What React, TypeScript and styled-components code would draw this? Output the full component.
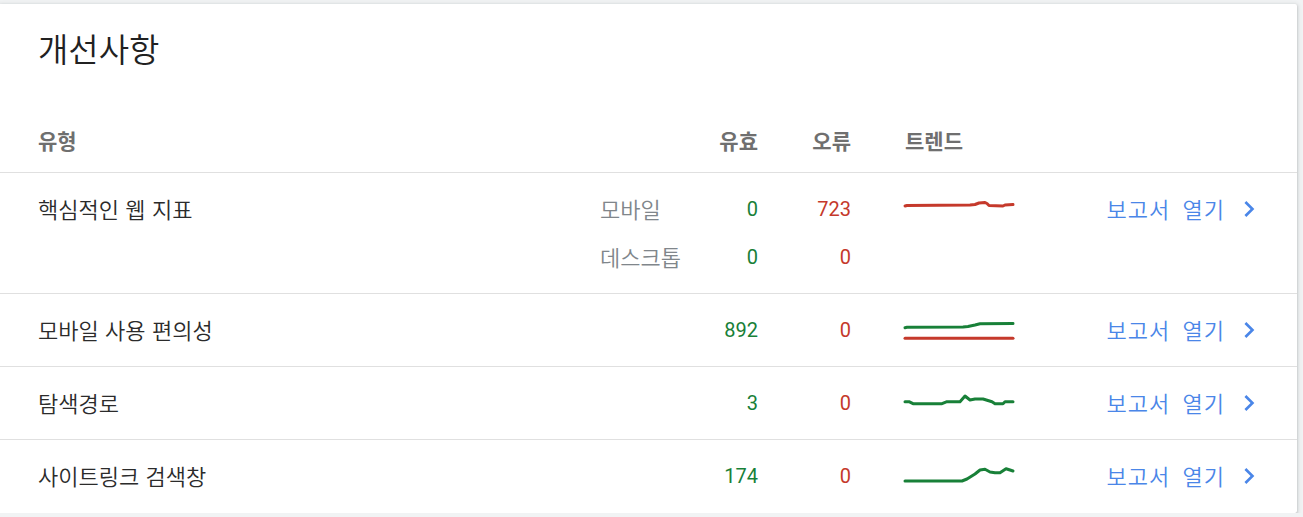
import React from "react";
import styled, { createGlobalStyle } from "styled-components";

const GlobalStyle = createGlobalStyle`
  html, body {
    margin: 0;
    padding: 0;
    background: #f1f3f4;
  }
  body {
    font-family: Roboto, "Noto Sans CJK KR", "Noto Sans", sans-serif;
    -webkit-font-smoothing: antialiased;
  }
`;

const Card = styled.section`
  width: 1297px;
  margin: 4px 0 0 0;
  background: #fff;
  border-radius: 0 2px 2px 0;
  box-shadow: 0 1px 2px 0 rgba(60, 64, 67, 0.3), 0 1px 4px 1px rgba(60, 64, 67, 0.15);
  box-sizing: border-box;
  padding-bottom: 1px;
`;

const Title = styled.h2`
  margin: 0;
  padding: 27px 38px 0;
  font-size: 33px;
  line-height: 40px;
  font-weight: 350;
  color: #212121;
`;

const Grid = styled.div`
  display: grid;
  grid-template-columns: 1fr 98px 60px 93px 162px 243px;
  padding: 0 41px 0 38px;
`;

const HeaderRow = styled(Grid)`
  margin-top: 37px;
  height: 64px;
  align-items: center;
  border-bottom: 1px solid #e0e0e0;
`;

const HeadCell = styled.div<{ $align?: "left" | "right"; $pad?: number }>`
  font-size: 21px;
  font-weight: 700;
  color: #6f6f6f;
  text-align: ${(p) => p.$align ?? "left"};
  padding-left: ${(p) => p.$pad ?? 0}px;
`;

const Row = styled(Grid)<{ $last?: boolean }>`
  grid-auto-rows: 48px;
  align-items: center;
  padding-top: 12px;
  padding-bottom: 12px;
  border-bottom: ${(p) => (p.$last ? "none" : "1px solid #e0e0e0")};
`;

const TypeLabel = styled.div<{ $span: number }>`
  grid-column: 1;
  grid-row: 1 / span ${(p) => p.$span};
  align-self: start;
  height: 46px;
  display: flex;
  align-items: center;
  font-size: 22px;
  font-weight: 350;
  word-spacing: 1px;
  color: #2b2b2b;
`;

const SubLabel = styled.div`
  grid-column: 2;
  font-size: 22px;
  font-weight: 350;
  color: #80868b;
  margin-top: -2px;
`;

const Num = styled.div<{ $col: number; $tone: "good" | "bad" }>`
  grid-column: ${(p) => p.$col};
  text-align: right;
  font-size: 20px;
  color: ${(p) => (p.$tone === "good" ? "#188038" : "#c5392b")};
`;

const TrendCell = styled.div`
  grid-column: 5;
  grid-row: 1;
  padding-left: 54px;
  height: 48px;
  display: flex;
  align-items: center;
`;

const Spark = styled.svg`
  display: block;
  width: 108px;
  height: 20px;
  overflow: visible;
`;

const LinkCell = styled.a`
  grid-column: 6;
  grid-row: 1;
  justify-self: end;
  display: flex;
  align-items: center;
  gap: 8px;
  font-size: 22px;
  font-weight: 350;
  letter-spacing: 1px;
  word-spacing: 6px;
  color: #4a86e8;
  text-decoration: none;
  cursor: pointer;
  margin-right: -9px;
  margin-top: -2px;
`;

const Chevron = styled.svg`
  width: 32px;
  height: 32px;
  fill: #4a86e8;
  margin-top: 2px;
`;

type Line = { color: "green" | "red"; pts: [number, number][] };

const colorMap = { green: "#188038", red: "#c5392b" };

const Sparkline = ({ lines }: { lines: Line[] }) => (
  <Spark viewBox="0 0 108 20">
    {lines.map((l, i) => (
      <polyline
        key={i}
        points={l.pts.map((p) => p.join(",")).join(" ")}
        fill="none"
        stroke={colorMap[l.color]}
        strokeWidth={3}
        strokeLinejoin="round"
        strokeLinecap="round"
      />
    ))}
  </Spark>
);

type Sub = { label?: string; valid: string; error: string };
type Item = { name: string; subs: Sub[]; lines: Line[] };

const items: Item[] = [
  {
    name: "핵심적인 웹 지표",
    subs: [
      { label: "모바일", valid: "0", error: "723" },
      { label: "데스크톱", valid: "0", error: "0" },
    ],
    lines: [
      {
        color: "red",
        pts: [
          [0, 7], [2, 6.5], [65, 6], [70, 5.5], [74, 4], [80, 3.5], [82, 4.5], [84, 6.5],
          [98, 7], [100, 6], [108, 5.5],
        ],
      },
    ],
  },
  {
    name: "모바일 사용 편의성",
    subs: [{ valid: "892", error: "0" }],
    lines: [
      {
        color: "green",
        pts: [[0, 7.7], [2, 7.3], [58, 7], [63, 6.5], [70, 5], [75, 3.7], [108, 3.5]],
      },
      { color: "red", pts: [[0, 18.3], [108, 18.3]] },
    ],
  },
  {
    name: "탐색경로",
    subs: [{ valid: "3", error: "0" }],
    lines: [
      {
        color: "green",
        pts: [
          [0, 8.7], [4, 8.7], [8, 10.7], [37, 10.7], [42, 8.7], [55, 8.7], [60, 3], [65, 7],
          [70, 6], [78, 6], [87, 8.7], [90, 10.7], [98, 10.7], [100, 8.7], [108, 8.7],
        ],
      },
    ],
  },
  {
    name: "사이트링크 검색창",
    subs: [{ valid: "174", error: "0" }],
    lines: [
      {
        color: "green",
        pts: [
          [0, 15], [57, 15], [62, 13], [70, 8], [75, 4], [80, 3.3], [85, 6], [90, 6.7],
          [95, 6.7], [101, 2.7], [105, 4], [108, 5],
        ],
      },
    ],
  },
];

export default function App() {
  return (
    <>
      <GlobalStyle />
      <Card>
        <Title>개선사항</Title>
        <HeaderRow>
          <HeadCell>유형</HeadCell>
          <HeadCell />
          <HeadCell $align="right">유효</HeadCell>
          <HeadCell $align="right">오류</HeadCell>
          <HeadCell $pad={54}>트렌드</HeadCell>
          <HeadCell />
        </HeaderRow>
        {items.map((item, idx) => (
          <Row key={item.name} $last={idx === items.length - 1}>
            <TypeLabel $span={item.subs.length}>{item.name}</TypeLabel>
            {item.subs.map((s, i) => (
              <React.Fragment key={i}>
                <SubLabel style={{ gridRow: i + 1 }}>{s.label ?? ""}</SubLabel>
                <Num $col={3} $tone="good" style={{ gridRow: i + 1 }}>
                  {s.valid}
                </Num>
                <Num $col={4} $tone="bad" style={{ gridRow: i + 1 }}>
                  {s.error}
                </Num>
              </React.Fragment>
            ))}
            <TrendCell>
              <Sparkline lines={item.lines} />
            </TrendCell>
            <LinkCell>
              보고서 열기
              <Chevron viewBox="0 0 24 24">
                <path d="M10 6L8.59 7.41 13.17 12l-4.58 4.59L10 18l6-6z" />
              </Chevron>
            </LinkCell>
          </Row>
        ))}
      </Card>
    </>
  );
}
